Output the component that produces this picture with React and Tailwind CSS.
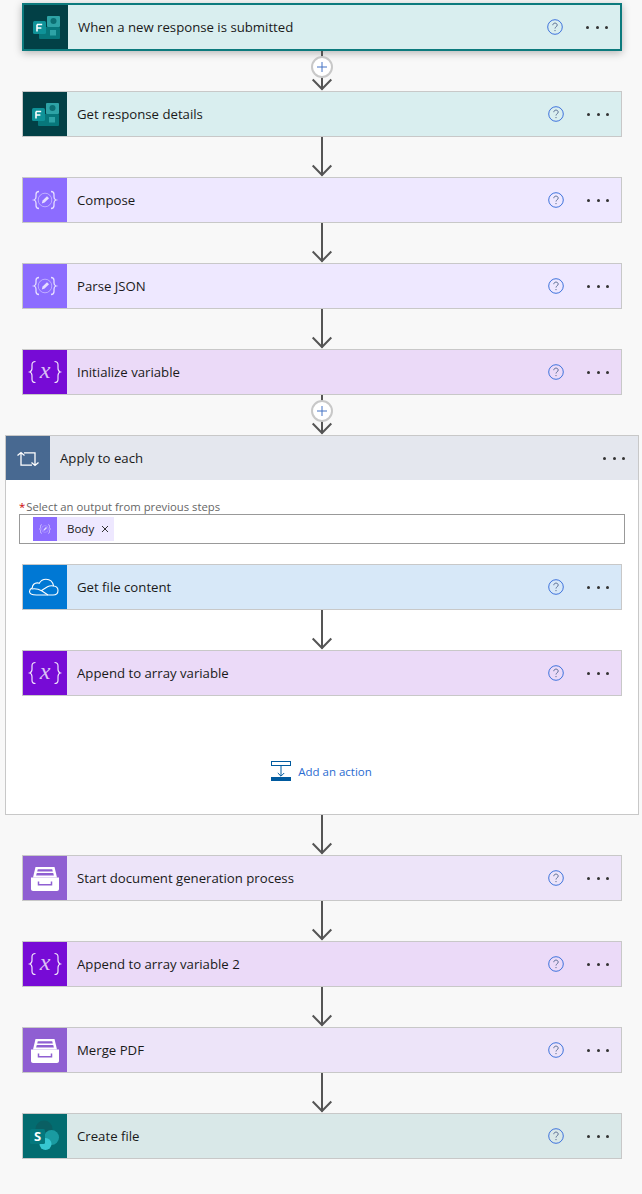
import React from 'react';

const FormsIcon = () => (
  <svg width="44" height="44" viewBox="0 0 44 44">
    <rect x="23" y="11" width="13" height="11" rx="1" fill="#2ea3a6" />
    <circle cx="29.5" cy="16" r="3" fill="#0c6f73" />
    <rect x="15" y="22" width="21" height="12" rx="1" fill="#07777b" />
    <rect x="26" y="25" width="6" height="5.5" fill="#2ea3a6" />
    <rect x="9" y="16" width="13" height="13" rx="1.5" fill="#0f9298" />
    <path d="M13 19.5h5.2M13 19.5v7M13 23h4.4" stroke="#fff" strokeWidth="1.6" fill="none" />
  </svg>
);

const ComposeIcon = ({ size = 44 }) => (
  <svg width={size} height={size} viewBox="0 0 44 44" fill="none" stroke="#e6deff" strokeWidth="1.3">
    <path d="M16 13.5c-2.6 0-3 1-3 3v2.5c0 1.6-.6 2.6-2 3 1.4.4 2 1.4 2 3v2.500c0 2 .4 3 3 3" />
    <path d="M28 13.500c2.600 0 3 1 3 3v2.500c0 1.600.6 2.600 2 3-1.400.4-2 1.400-2 3v2.500c0 2-.4 3-3 3" />
    <circle cx="22" cy="22" r="6.800" strokeWidth="0.8" strokeOpacity="0.7" />
    <path d="M18.800 25.400l.8-2.800 4.400-4.400 2 2-4.400 4.400z" fill="#e6deff" stroke="none" />
  </svg>
);

const VariableIcon = () => (
  <svg width="44" height="44" viewBox="0 0 44 44" fill="none" stroke="#f0e4fb" strokeWidth="1.200">
    <path d="M12.500 11.500c-3 0-3.500 1.200-3.500 3.300v3.400c0 2-.8 3.300-2.300 3.800 1.500.5 2.300 1.800 2.300 3.800v3.400c0 2.100.5 3.300 3.500 3.300" />
    <path d="M31.500 11.500c3 0 3.500 1.200 3.500 3.300v3.400c0 2 .8 3.300 2.300 3.800-1.500.5-2.300 1.800-2.300 3.800v3.400c0 2.100-.5 3.300-3.500 3.300" />
    <text x="22" y="28" textAnchor="middle" fontSize="24" fontStyle="italic" fill="#f0e4fb" fillOpacity="0.85" stroke="none" fontFamily="'Liberation Serif', serif">x</text>
  </svg>
);

const OneDriveIcon = () => (
  <svg width="44" height="44" viewBox="0 0 44 44" fill="none" stroke="#fff" strokeWidth="1.100">
    <path d="M13.500 30h16.500c3 0 5-1.900 5-4.500 0-2.400-1.800-4.300-4.400-4.500-.8-3.900-3.800-6.700-7.600-6.700-2.900 0-5.400 1.500-6.700 4-.7-.3-1.300-.4-2-.4-2.900 0-5 2-5 4.900-1.700.9-2.800 2-2.800 3.700 0 2.500 2.600 3.500 7 3.500z" />
    <path d="M8.500 24c4-.9 7.500.2 10.500 2l6 4M18.500 25.500l6-3.700c2-1.100 4-1.300 6-.8" />
  </svg>
);

const ArchiveIcon = () => (
  <svg width="44" height="44" viewBox="0 0 44 44">
    <path d="M12.500 11h19l2.500 10.500H10z" fill="#fff" />
    <path d="M14.800 13.200h14.400l.6 2.200H14.200zM13.800 17h16.400l.7 2.600H13.100z" fill="#8f5fd2" />
    <path d="M8 21.500h28v11.500c0 1.100-.9 2-2 2H10c-1.100 0-2-.9-2-2z" fill="#fff" />
    <path d="M15.500 25.500v3.300h13v-3.300" fill="none" stroke="#8f5fd2" strokeWidth="1.500" />
  </svg>
);

const SharePointIcon = () => (
  <svg width="44" height="44" viewBox="0 0 44 44">
    <circle cx="21" cy="15" r="8.500" fill="#0a5f63" />
    <circle cx="28.500" cy="23.500" r="7.500" fill="#1a9ba1" />
    <circle cx="22.500" cy="30" r="6" fill="#37c6d0" />
    <rect x="7" y="15" width="15" height="15" rx="1.500" fill="#04787d" />
    <text x="14.500" y="27" textAnchor="middle" fontSize="13" fontWeight="700" fill="#fff" fontFamily="'Open Sans', sans-serif">S</text>
  </svg>
);

const LoopIcon = () => (
  <svg width="44" height="44" viewBox="0 0 44 44" fill="none" stroke="#fff" strokeWidth="1.300">
    <path d="M11.500 19.500l3.500-3 3.500 3M15 16.800v12.400h11" />
    <path d="M25.500 26.500l3.500 3 3.500-3M29 29.200v-12.400h-11" />
  </svg>
);

const HelpIcon = () => (
  <svg width="16" height="16" viewBox="0 0 16 16" fill="none" className="shrink-0">
    <circle cx="8" cy="8" r="7.300" stroke="#3f73dc" strokeWidth="1" />
    <path d="M5.800 6.200c0-1.300 1-2.100 2.200-2.100s2.200.8 2.200 2c0 1.700-2.200 1.700-2.200 3.400" stroke="#5c6f94" strokeWidth="1" />
    <circle cx="8" cy="11.600" r="0.700" fill="#5c6f94" />
  </svg>
);

const Dots = () => (
  <div className="flex w-[22px] justify-between shrink-0">
    <span className="h-[3px] w-[3px] rounded-full bg-[#333]" />
    <span className="h-[3px] w-[3px] rounded-full bg-[#333]" />
    <span className="h-[3px] w-[3px] rounded-full bg-[#333]" />
  </div>
);

const Card = ({ title, icon, card, tile, selected }) => (
  <div
    className={`flex items-center w-[600px] ${card} ${
      selected
        ? 'h-[48px] border-2 border-[#0c7a7d] shadow-[0_2px_8px_rgba(0,0,0,0.28)]'
        : 'h-[46px] border border-[#c8c8c8]'
    }`}
  >
    <div className={`flex h-full w-[44px] shrink-0 items-center justify-center ${tile}`}>{icon}</div>
    <div className="ml-[10px] flex-1 pt-[2px] text-[13.200px] text-[#1a1a1a]">{title}</div>
    <HelpIcon />
    <div className="ml-[23px] mr-[12px]">
      <Dots />
    </div>
  </div>
);

const Connector = ({ plus }) => (
  <div className="relative flex h-[40px] w-full justify-center">
    <svg width="22" height="40" viewBox="0 0 22 40" fill="none" stroke="#555" strokeWidth="2">
      <path d="M11 0v38.500" />
      <path d="M1.700 28.500l9.300 9.500 9.300-9.500" />
    </svg>
    {plus && (
      <div className="absolute top-[5px] flex h-[22px] w-[22px] items-center justify-center rounded-full border-2 border-[#c8c8c8] bg-white">
        <svg width="12" height="12" viewBox="0 0 12 12" stroke="#4472c4" strokeWidth="1">
          <path d="M6 1v10M1 6h10" />
        </svg>
      </div>
    )}
  </div>
);

const variant = {
  forms: { card: 'bg-[#d9eeef]', tile: 'bg-[#024046]', icon: <FormsIcon /> },
  compose: { card: 'bg-[#eee8ff]', tile: 'bg-[#8c6cff]', icon: <ComposeIcon /> },
  variable: { card: 'bg-[#ebdaf8]', tile: 'bg-[#770bd6]', icon: <VariableIcon /> },
  onedrive: { card: 'bg-[#d7e8f8]', tile: 'bg-[#0078d4]', icon: <OneDriveIcon /> },
  archive: { card: 'bg-[#ede4f9]', tile: 'bg-[#8f5fd2]', icon: <ArchiveIcon /> },
  sharepoint: { card: 'bg-[#d9e8e8]', tile: 'bg-[#036c70]', icon: <SharePointIcon /> },
};

const ApplyToEach = () => (
  <div className="w-[634px] h-[380px] border border-[#c8c8c8] bg-white">
    {/* Header */}
    <div className="flex h-[44px] items-center bg-[#e4e7ee]">
      <div className="flex h-full w-[44px] shrink-0 items-center justify-center bg-[#486991]">
        <LoopIcon />
      </div>
      <div className="ml-[10px] flex-1 pt-[2px] text-[13.200px] text-[#1a1a1a]">Apply to each</div>
      <div className="mr-[13px]">
        <Dots />
      </div>
    </div>

    {/* Input */}
    <div className="px-[13px] pt-[20px]">
      <div className="flex h-[14px] items-center text-[11.300px] text-[#666]">
        <span className="mr-[1px] text-[#c00]">*</span>Select an output from previous steps
      </div>
      <div className="flex h-[30px] w-[606px] items-center border border-[#999] pl-[13px]">
        <div className="flex h-[24px] items-center bg-[#eee8ff]">
          <div className="flex h-[24px] w-[24px] items-center justify-center overflow-hidden bg-[#8c6cff]">
            <ComposeIcon size={22} />
          </div>
          <span className="ml-[10px] text-[11.500px] text-[#1a1a1a]">Body</span>
          <span className="ml-[7px] mr-[5px]">
            <svg width="8" height="8" viewBox="0 0 8 8" stroke="#333" strokeWidth="1">
              <path d="M1 1l6 6M7 1l-6 6" />
            </svg>
          </span>
        </div>
      </div>
    </div>

    {/* Nested steps */}
    <div className="flex flex-col items-center pt-[20px]">
      <Card title="Get file content" {...variant.onedrive} />
      <Connector />
      <Card title="Append to array variable" {...variant.variable} />
    </div>

    {/* Add an action */}
    <div className="mt-[65px] flex items-center justify-center gap-[7px] pr-[1px]">
      <svg width="20" height="20" viewBox="0 0 20 20" fill="none">
        <rect x="0.500" y="0.500" width="19" height="4" stroke="#005a9e" />
        <path d="M10 5v10M6.800 12l3.200 3.200 3.200-3.200" stroke="#005a9e" />
        <rect x="0" y="16" width="20" height="4" fill="#005a9e" />
      </svg>
      <span className="pt-[2px] text-[11.500px] text-[#2a6bd1]">Add an action</span>
    </div>
  </div>
);

export default function App() {
  return (
    <div className="min-h-[1194px] bg-[#f8f8f8] pt-[3px] pl-[2px] flex flex-col items-center [font-family:'Open_Sans','Liberation_Sans',sans-serif]">
      <Card title="When a new response is submitted" selected {...variant.forms} />
      <Connector plus />
      <Card title="Get response details" {...variant.forms} />
      <Connector />
      <Card title="Compose" {...variant.compose} />
      <Connector />
      <Card title="Parse JSON" {...variant.compose} />
      <Connector />
      <Card title="Initialize variable" {...variant.variable} />
      <Connector plus />
      <ApplyToEach />
      <Connector />
      <Card title="Start document generation process" {...variant.archive} />
      <Connector />
      <Card title="Append to array variable 2" {...variant.variable} />
      <Connector />
      <Card title="Merge PDF" {...variant.archive} />
      <Connector />
      <Card title="Create file" {...variant.sharepoint} />
    </div>
  );
}
